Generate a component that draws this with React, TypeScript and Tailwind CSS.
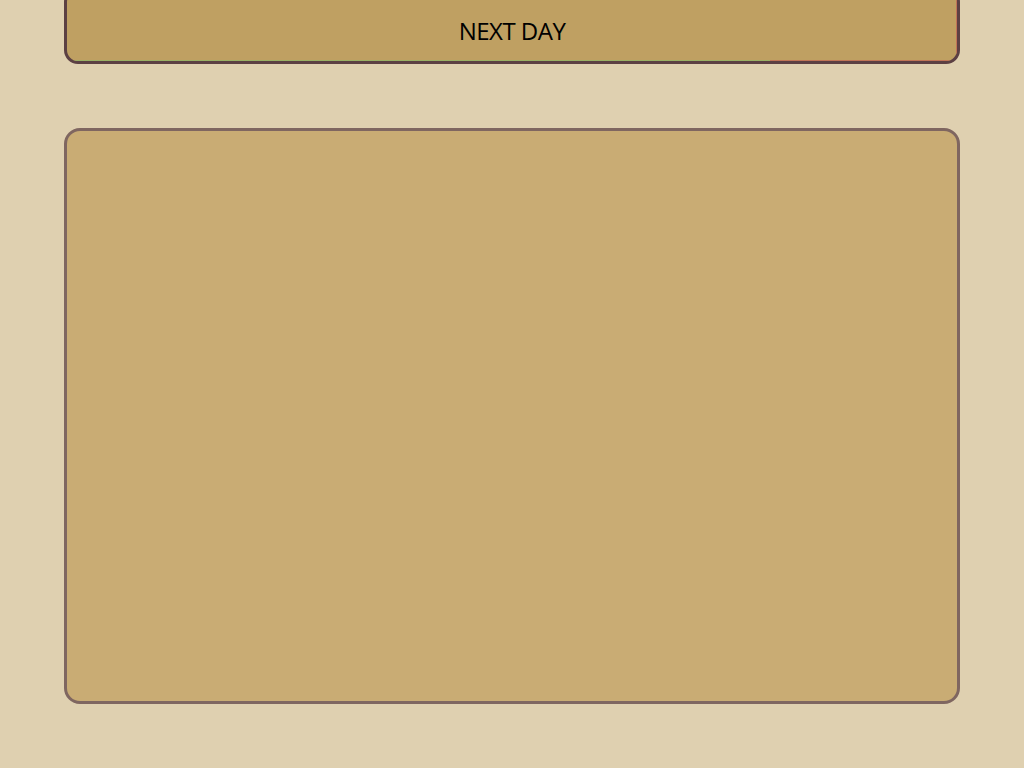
export default function App() {
  return (
    <div className="min-h-[768px] w-full bg-[#dfd0b0] flex flex-col items-center overflow-hidden" style={{ fontFamily: '"Open Sans", "Noto Sans", sans-serif' }}>
      <button className="-mt-[12px] w-[896px] h-[76px] rounded-[14px] border-[3px] border-[#5c4043] bg-[#bfa062] relative overflow-hidden flex items-center justify-center text-[24px] tracking-[-0.5px] text-black">
        <span className="pt-[10px]">NEXT DAY</span>
        <div className="absolute left-0 right-0 bottom-0 h-[1px] flex">
          <div className="w-[703px] bg-[#9bb064]" />
          <div className="flex-1 bg-[#c07456]" />
        </div>
        <div className="absolute right-0 top-0 bottom-0 w-[1px] bg-[#c07456]" />
      </button>
      <div className="mt-[64px] w-[896px] h-[576px] rounded-[16px] border-[3px] border-[#7f6660] bg-[#c9ac74]" />
    </div>
  );
}
